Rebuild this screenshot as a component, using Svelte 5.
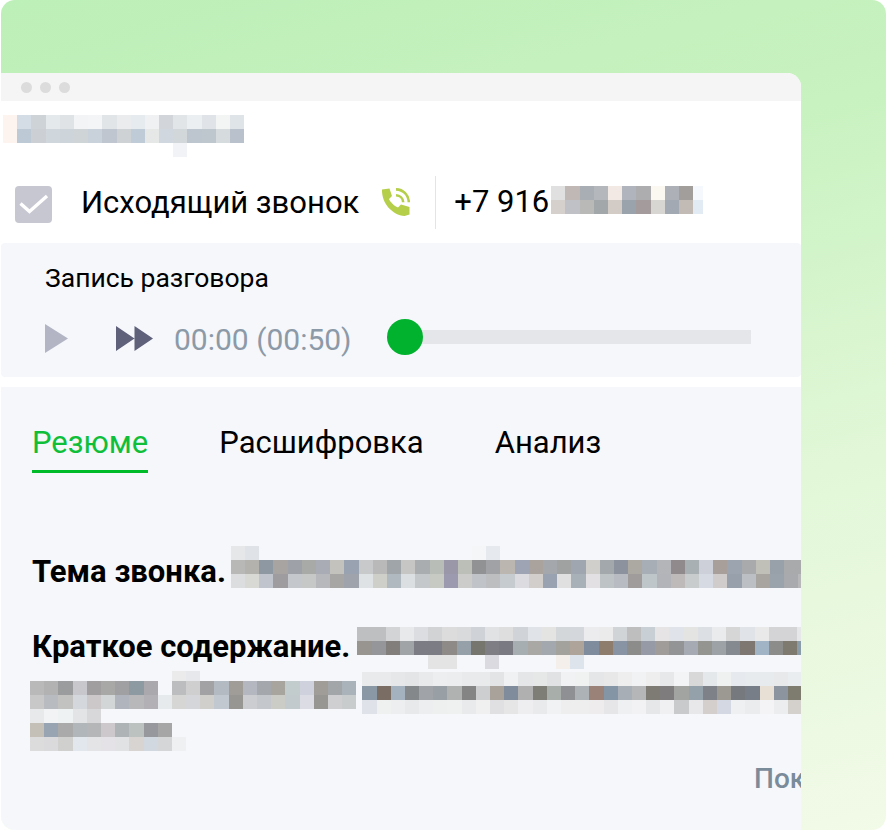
<script>
  // pixelated (censored) fragments, each cell is 14.2px, "" means empty
  const cell = 14.2;

  const titleBlur = [
    ["fdf3ef", "d4dde6", "cdd3d6", "e4e9ec", "dfe3e5", "f2f4f6", "f3f5f7", "e2e5e8", "eaeced", "e6ebf0", "eff1f3", "d2d6da", "e2e5e7", "ebeff2", "e0e4e8", "f3f5f5", "dfe4e8"],
    ["fdf3ef", "bdc9d4", "ccd0d4", "cfd6dc", "cdd5da", "cfd4d6", "c9d1da", "bfc6d0", "cfd2d4", "bfccd8", "e6e8e8", "d0d7de", "d2d7da", "bdc5ce", "bec6ce", "d6dbde", "b9c2cc"],
    ["", "", "", "", "", "", "", "", "", "", "", "", "f1f3f6"],
  ];

  const phoneBlur = [
    ["e0e0e0", "bfb8b4", "a9aeb4", "b4b7bc", "f2e9e4", "b0b4bc", "adadb0", "fbf8f2", "adb0b6", "a29e9c", "f5f9fd"],
    ["d5d0cc", "c0c1c6", "b9bab8", "a2a7aa", "d2cbc6", "9aa3ac", "a39b9c", "d8d6d2", "a2a9b2", "c2bab4", "e2eaf4"],
  ];

  const themeBlur = [
    ["e6e7e9", "dfe2e6", "", "", "", "", "", "", "", "", "", "", "", "", "", "", "", "f5f6f7", "e6e9ee"],
    ["b8b8b6", "b3b2ac", "8e98a2", "a8a4a2", "9ea2a8", "a8aaa8", "a9abb5", "c4c2bc", "98a2b0", "c8c9cb", "b8b9b8", "a0a5aa", "c6c6c4", "aaadb0", "b8bdb8", "9a98a8", "bcbeb8", "909294", "a0a2a6", "bbb6b0", "9ea4b4", "aaa29c", "a4a8ac", "a0a2a2", "a0a6b0", "d0cfcc", "a2a8ac", "8c929e", "aca8a2", "a8aeb6", "b4b5b8", "908a8c", "a8b0b4", "cdd0d8", "a89e9a", "9ca4b0", "a8aaac", "c0bfb8", "98a0aa", "a8aaac", "a8aaac"],
    ["dcdddf", "d8d8d4", "c0c4cc", "9e9c9e", "c4c8cc", "c6c8c8", "b6b8bc", "a8a6a4", "9fa3ac", "dfe2e4", "cfcfca", "b0b8c0", "dcdfe2", "c4c8ca", "c6cac2", "9c9aae", "cccdca", "c0c4c8", "bcbec0", "c6cbd0", "dcdce0", "d2cecc", "98a2b0", "e0e0e0", "a8b0b8", "e2e0e2", "bec4c6", "b8bcc2", "a09c9c", "bec6ca", "b2b4ba", "bebaba", "c8cccc", "d6dae2", "d0cccc", "98a0ac", "bcc0c4", "a8a4a0", "9aa2ac", "a8aaae", "b8b8ba"],
  ];

  const summaryBlur = [
    ["bebfc0", "bebfc0", "d2d4d6", "e8e9ea", "dcdde0", "d2d3d4", "dcdcdc", "d8dadc", "cfd2d6", "e0e2e4", "dedede", "d0d4d8", "e0e4e8", "e4e4e2", "d4d7da", "d4d8dc", "ececee", "ebebeb", "d0d4d6", "bfbebe", "c8d0d6", "e6e4e4", "e0e4ea", "e4e4e2", "dce0e4", "eaebed", "d6d6d6", "e0e3e8", "e8e9e8", "d4d4d6", "d4d4d6", "e6e7e8", "d0d3d8", "d6d6d8", "d6d6d8", "e6e9ee"],
    ["989490", "94969a", "827e7c", "a0a4a6", "7c7c84", "7c7c84", "8e8a88", "96a0a8", "76766e", "7e7e84", "7a7a82", "a6aeb2", "aaa8a4", "a2a8ae", "a4a29c", "aea49a", "7e8c9e", "8e7c6c", "8894a4", "8c8c8a", "969aa6", "a09c9a", "929496", "a6aab2", "949490", "9ca2a6", "848a90", "7e7670", "a0b4c6", "8c8c8a", "7e7a70", "8a9ca8", "7a766a"],
    ["", "", "", "", "", "e4e4e4", "e4e4e4", "", "", "dadae0", "", "", "", "", "f4efea", "dde4ec"],
  ];

  const bodyBlurLeft = [
    ["", "", "", "", "", "", "", "", "", "", "ebebeb", "e6e8ec"],
    ["b9b9b9", "b2b2b2", "9a9c9e", "c8c8cc", "a09e9e", "a8a8a6", "a0a0a2", "8e9aa2", "aaa8ac", "", "bcbdbe", "cfcfcf", "a2a2a4", "b4bac2", "a09c98", "b4b6c0", "a4a8ac", "a8a49e", "c2cccc", "cfd2dc", "a09c98", "a2a6a8", "aab2ba"],
    ["c8c8c8", "b8bcc0", "c2c2c0", "d4d8dc", "ccc8ca", "d2d6d6", "b0b4bc", "b8b8ba", "b2b0b4", "e6eaec", "d6d6d4", "d4d6da", "d0cfcc", "c2c8d0", "989692", "cccdd0", "c4c8cc", "ccccc6", "c2cace", "dcdde4", "989692", "cfcfd2", "c8cccc"],
    ["e8e9ea", "f2f3f4", "eff2f3", "e2e4e6", "d8d8da"],
    ["c4c0b8", "98a4b2", "aaaaaa", "b0b6ba", "b4b6b8", "ccc8cc", "aeb4b6", "bcc2c0", "96989e", "a6a6a6"],
    ["dcdcdc", "dadadc", "d0d0ce", "e2e7ee", "e4e4e6", "e4e2e6", "e0e2e4", "d8d4d2", "d2d8e0", "d4d6d8", "eff0f2"],
  ];

  const bodyBlurRight = [
    ["e9eaeb", "e9eaeb", "e6e7e8", "e4e5e6", "e8eaec", "eceeef", "ecedee", "e8eaec", "e8eaec", "e2e4e6", "f0f1f2", "e4e6e8", "e6e8e8", "e0e2e4", "f0f2f4", "f0f1f1", "e4e6e8", "e8e8e8", "eeeeee", "f0f2f4", "eeeeee", "e6e8ea", "f2f4f6", "d8d8d8", "e4e8ea", "eff0f0", "e6eaee", "e8ebee", "e8ebee", "e8e9ea", "e9edef", "ecedee", "e6e7e8", "e8e8e8", "e8e9ea", "e8e9ea"],
    ["8a98a6", "7a6e64", "a4b2c0", "84888a", "a0a4a8", "98a0a6", "b0b2b2", "848484", "ccced0", "a8a29a", "808c9c", "b0b0b0", "7e7e76", "a8aeaa", "8e9094", "acb2b6", "9a8278", "8496a6", "a8aeb6", "b4b6b8", "7e7a74", "7e7c7c", "a2a4a2", "94a0aa", "7e8288", "9c9892", "767a7e", "787e88", "e8e0d4", "8c94a0", "7e7c6e", "8c9cac", "726a5e"],
    ["dfe2e8", "eff0f0", "edeef0", "e8e9ea", "eceef0", "eef0f0", "eff0f0", "e8eaec", "f0f0f0", "e0e0e2", "e6e6e6", "eeeef0", "e8eaec", "f0f2f4", "eeeeee", "eeeeee", "eeecec", "e6e6e8", "eef0f2", "f2f2f4", "e6e7e9", "f0f0f2", "c8cacc", "e8e8ea", "d4cfcc", "d4d8e2", "eef0f2", "eaecee", "f4f4f6", "ecedee", "d4d0cc", "e0e8f0"],
  ];

  const tabs = ["Резюме", "Расшифровка", "Анализ"];
</script>

{#snippet mosaic(rows, cls)}
  <span class="mosaic {cls}">
    {#each rows as row}
      <span class="mosaic-row">
        {#each row as color}
          <i style="background:{color ? '#' + color : 'transparent'};width:{cell}px"></i>
        {/each}
      </span>
    {/each}
  </span>
{/snippet}

<div class="panel">
  <div class="window">
    <div class="titlebar">
      <span class="dot"></span>
      <span class="dot"></span>
      <span class="dot"></span>
    </div>

    <div class="title-line">
      {@render mosaic(titleBlur, "")}
    </div>

    <div class="call-row">
      <span class="check">
        <svg width="30" height="20" viewBox="0 0 30 20">
          <path d="M1.5 9.5 L10.5 17.5 L28 2" fill="none" stroke="#fff" stroke-width="3.4" />
        </svg>
      </span>
      <span class="call-type">Исходящий звонок</span>
      <svg class="phone" width="29" height="28" viewBox="0 0 29 28">
        <path
          d="M1 1.5 L8.5 0.5 L11 8 L8 11 C9.4 14 13 18 17 19.5 L20 16.5 L28.5 19 L28.5 26.5 L23.5 28 C11.5 27 0.5 15.5 1 1.5 Z"
          fill="#b5cf4a"
        />
        <path d="M15 7.2 C19 7.4 22 10.4 22.2 14.2" fill="none" stroke="#b5cf4a" stroke-width="2.6" />
        <path d="M15 1.4 C22.4 1.6 27.6 7 27.8 14.2" fill="none" stroke="#b5cf4a" stroke-width="2.6" />
      </svg>
      <span class="divider"></span>
      <span class="phone-number">+7 916</span>
      <span class="phone-blur">{@render mosaic(phoneBlur, "m-phone")}</span>
    </div>

    <section class="player">
      <div class="player-title">Запись разговора</div>
      <div class="controls">
        <svg class="play" width="23" height="29" viewBox="0 0 23 29">
          <path d="M0 0 L23 14.5 L0 29 Z" fill="#b3b5c4" />
        </svg>
        <svg class="forward" width="37" height="25" viewBox="0 0 37 25">
          <path d="M0 0 L18.5 12.5 L0 25 Z M18.5 0 L37 12.5 L18.5 25 Z" fill="#5f6079" />
        </svg>
        <span class="time">00:00 (00:50)</span>
        <div class="track">
          <span class="knob"></span>
        </div>
      </div>
    </section>

    <section class="details">
      <nav class="tabs">
        {#each tabs as tab, i}
          <span class="tab" class:active={i === 0}>{tab}</span>
        {/each}
      </nav>

      <div class="line theme">
        <b>Тема звонка.</b>
        {@render mosaic(themeBlur, "m-theme")}
      </div>

      <div class="line summary">
        <b>Краткое содержание.</b>
        {@render mosaic(summaryBlur, "m-summary")}
      </div>

      <div class="body-blur">
        {@render mosaic(bodyBlurLeft, "m-left")}
        {@render mosaic(bodyBlurRight, "m-right")}
      </div>

      <div class="more">Показать</div>
    </section>
  </div>
</div>

<style>
  :global(body) {
    margin: 0;
    background: #fff;
  }
  .panel {
    box-sizing: border-box;
    width: 885px;
    height: 830px;
    margin-left: 1px;
    padding-top: 73px;
    border-radius: 14px;
    background: linear-gradient(165deg, #bdefb8 0%, #c8f2c0 30%, #e2f7d8 65%, #f2fae8 100%);
    overflow: hidden;
    font-family: Roboto, sans-serif;
  }
  .window {
    display: flex;
    flex-direction: column;
    width: 800px;
    height: 757px;
    background: #fff;
    border-radius: 0 14px 0 14px;
    overflow: hidden;
  }
  .titlebar {
    display: flex;
    align-items: center;
    gap: 8px;
    flex: none;
    height: 28px;
    padding-left: 20px;
    background: #f5f5f5;
  }
  .dot {
    width: 11px;
    height: 11px;
    border-radius: 50%;
    background: #dcdcdc;
  }
  .title-line {
    box-sizing: border-box;
    height: 73px;
    padding: 14px 0 0 2px;
    flex: none;
  }
  .mosaic {
    display: inline-flex;
    flex-direction: column;
    flex: none;
    vertical-align: top;
  }
  .mosaic-row {
    display: flex;
    height: 14px;
  }
  .mosaic-row i {
    display: block;
    flex: none;
    height: 100%;
  }
  .m-phone .mosaic-row i:last-child {
    width: 10px !important;
  }
  .call-row {
    display: flex;
    align-items: center;
    flex: none;
    box-sizing: border-box;
    height: 69px;
    padding-bottom: 12px;
  }
  .check {
    display: flex;
    align-items: center;
    justify-content: center;
    flex: none;
    width: 37px;
    height: 37px;
    margin: 3px 0 0 14px;
    border-radius: 4px;
    background: #c6c7d1;
  }
  .call-type {
    margin-left: 29px;
    font-size: 31px;
    color: #000;
  }
  .phone {
    margin: -2px 0 0 22px;
    flex: none;
  }
  .divider {
    width: 1px;
    height: 53px;
    margin: 0 18px 0 25px;
    background: #e4e4e4;
    flex: none;
  }
  .phone-number {
    margin-bottom: 3px;
    font-size: 31px;
    color: #000;
  }
  .phone-blur {
    display: flex;
    margin: 0 0 5px 2px;
  }
  .player {
    flex: none;
    box-sizing: border-box;
    height: 134px;
    padding: 20px 0 0 44px;
    background: #f5f7fb;
    border-radius: 4px;
  }
  .player-title {
    font-size: 26.5px;
    line-height: 30px;
    color: #000;
  }
  .controls {
    display: flex;
    align-items: center;
    margin-top: 27px;
  }
  .play {
    flex: none;
  }
  .forward {
    margin-left: 48px;
    flex: none;
  }
  .time {
    margin: 2px 0 0 21px;
    font-size: 30px;
    color: #8c9aa8;
    white-space: nowrap;
  }
  .track {
    position: relative;
    width: 346px;
    height: 14px;
    margin: 0 0 4px 53px;
    background: #e5e6ea;
  }
  .knob {
    position: absolute;
    left: -18px;
    top: -11px;
    width: 36px;
    height: 36px;
    border-radius: 50%;
    background: #00b22d;
  }
  .details {
    flex: 1;
    margin-top: 10px;
    padding: 36px 0 0 31px;
    background: #f5f7fb;
    min-height: 0;
  }
  .tabs {
    display: flex;
    gap: 71px;
  }
  .tab {
    padding-bottom: 7px;
    font-size: 31px;
    line-height: 40px;
    color: #000;
    border-bottom: 3px solid transparent;
  }
  .tab.active {
    color: #0fbf3a;
    border-bottom-color: #00bb29;
  }
  .line {
    display: flex;
    align-items: flex-start;
    white-space: nowrap;
    font-size: 31px;
    line-height: 40px;
    color: #000;
  }
  .line b {
    font-weight: 700;
  }
  .theme {
    margin-top: 79px;
  }
  .summary {
    margin-top: 35px;
  }
  .m-theme {
    margin: -6px 0 0 5px;
  }
  .m-summary {
    margin: 0 0 0 7px;
  }
  .body-blur {
    display: flex;
    align-items: flex-start;
    margin-top: -2px;
  }
  .m-left {
    margin-left: -2px;
  }
  .m-left .mosaic-row:first-child {
    height: 10px;
    margin-top: 4px;
  }
  .m-right {
    margin: 5px 0 0 6px;
  }
  .more {
    margin-top: 12px;
    padding-left: 722px;
    white-space: nowrap;
    font-size: 28px;
    line-height: 32px;
    font-weight: 500;
    color: #7a8b9a;
  }
</style>
